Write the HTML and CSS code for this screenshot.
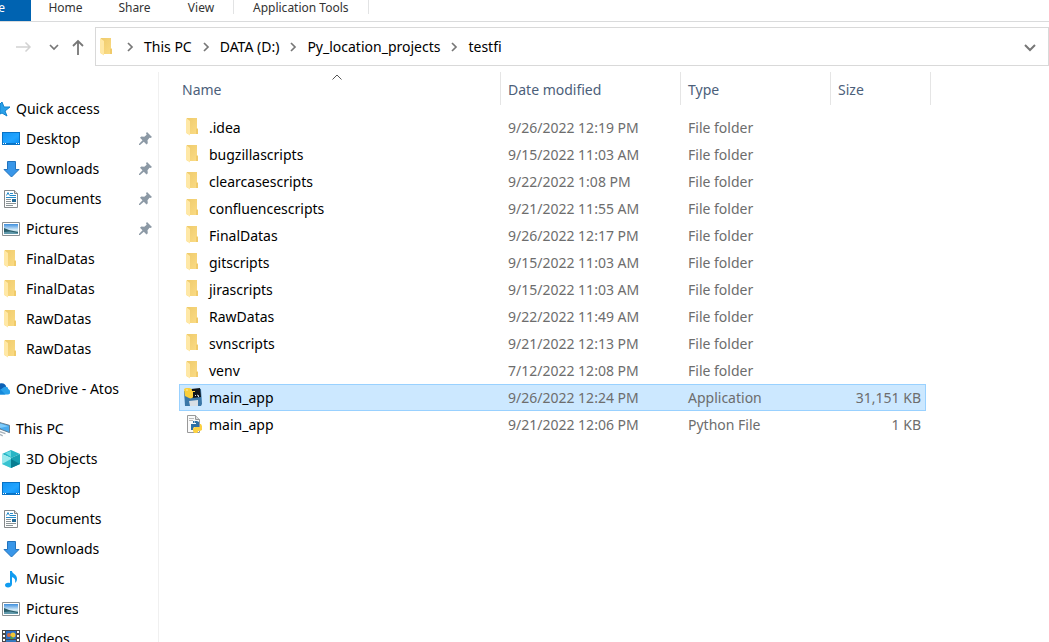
FILE: index.html
```
<!DOCTYPE html>
<html lang="en">
<head>
<meta charset="utf-8">
<title>testfi</title>
<link rel="stylesheet" href="styles.css">
</head>
<body>
<svg class="defs" aria-hidden="true">
  <defs>
    <linearGradient id="gold" x1="0" y1="0" x2="1" y2="1"><stop offset="0" stop-color="#efcb6c"/><stop offset="1" stop-color="#fbdc86"/></linearGradient>
    <linearGradient id="blue" x1="0" y1="0" x2="1" y2="1"><stop offset="0" stop-color="#1496f5"/><stop offset=".6" stop-color="#22a4ff"/><stop offset="1" stop-color="#0b8ff2"/></linearGradient>
    <linearGradient id="sky" x1="0" y1="0" x2="0" y2="1"><stop offset="0" stop-color="#3f8fdd"/><stop offset=".6" stop-color="#d9eefa"/><stop offset="1" stop-color="#4f8f96"/></linearGradient>
  </defs>
  <symbol id="folder" viewBox="0 0 18 18"><path d="M3 0h10v10l1 1v5H3z" fill="url(#gold)"/><path d="M12 10.500l2 .5v5h-2z" fill="#f0ca6a"/><path d="M2 0l4 3v14.500L2 15z" fill="#ffe8a6"/></symbol>
  <symbol id="desktop" viewBox="0 0 18 18"><rect y="2" width="18" height="13" fill="#0873c6"/><rect x="1" y="3" width="16" height="10" fill="url(#blue)"/><path d="M1 13.500h1m1 0h1m10 0h1m1 0h1" stroke="#fff"/></symbol>
  <symbol id="download" viewBox="0 0 18 18"><path d="M5.500 1.500h8v8h3.500l-7.500 7.500-7.500-7.500h3.500z" fill="#3896e8" stroke="#2273bd"/></symbol>
  <symbol id="document" viewBox="0 0 18 18"><path d="M2.500 .5h10l3 3v14h-13z" fill="#fff" stroke="#85898b"/><path d="M12.500 .5v3h3" fill="#ddd" stroke="#85898b"/><path d="M4.500 5.500l1.500-3 1.500 3M8 3.500h3M8 5.500h6" fill="none" stroke="#278bc9"/><path d="M4 7.500h10" stroke="#278bc9"/><path d="M4 9.500h5M4 11.500h5M4 13.500h10M4 15.500h7" stroke="#8b9496"/><path d="M10 9h4v3h-4z" fill="#236995"/></symbol>
  <symbol id="picture" viewBox="0 0 18 18"><path d="M.5 2.500h17v13H.5z" fill="#fff" stroke="#8b9093"/><path d="M2 4h14v10H2z" fill="url(#sky)"/><path d="M2 8l5 2 9 2v2H2z" fill="#295d6a"/><path d="M2 12l6-.5 8 1.500v1H2z" fill="#6199ab"/></symbol>
  <symbol id="cube" viewBox="0 0 18 18"><path d="M9 0l9 4-9 4-9-4z" fill="#26b5c5"/><path d="M0 4l9 4v10l-9-4z" fill="#99e9ed"/><path d="M0 14l9-5v9z" fill="#37c2d0"/><path d="M18 4l-9 4v10l9-4z" fill="#16a0b2"/><path d="M9 9l9 5-9 4z" fill="#087d91"/><path d="M3 3l6-2v6z" fill="#68dce4"/></symbol>
  <symbol id="music" viewBox="0 0 18 18"><path d="M8 1h2c0 3 5 3 5 8 0 2-1 3-2 4 1-4-1-5-3-6v7c0 2-2 3.500-4 3.500S3 16.500 3 15s2-3 5-2z" fill="#119cf0"/></symbol>
  <symbol id="video" viewBox="0 0 18 18"><path d="M0 0h18v18H0z" fill="#47494d"/><path d="M2 1v17M16 1v17" stroke="#fff" stroke-width="2" stroke-dasharray="2 2"/><path d="M4 1h10v8H4z" fill="#286fc9"/><path d="M4 10h10v8H4z" fill="#3478bd"/><circle cx="7" cy="5" r="2" fill="#d46b3f"/><circle cx="11" cy="5" r="2.500" fill="#f0c735"/><path d="M8 9l1-3 3 3z" fill="#49a444"/></symbol>
  <symbol id="pin" viewBox="0 0 14 14"><path d="M8 0l5 5-1.500 1-1-.3-2 2.500.3 3-1.300 1.300-2.700-2.800L1 13l-1 0 0-1 3.500-3.800L1 5.700l1.300-1.200 3 .3 2.400-2L7 1.200z" fill="#8c99a5"/></symbol>
  <symbol id="chevron" viewBox="0 0 8 10"><path d="M2 1l4 4-4 4" fill="none" stroke="#777" stroke-width="1.700"/></symbol>
</svg>

<nav class="tabs" aria-label="Ribbon">
  <button class="tab tab-file">File</button>
  <button class="tab tab-home">Home</button>
  <button class="tab tab-share">Share</button>
  <button class="tab tab-view">View</button>
  <button class="tab tab-tools">Application Tools</button>
</nav>

<div class="toolbar">
  <button class="tool forward" aria-label="Forward"><svg width="16" height="12" viewBox="0 0 16 12"><path d="M0 6h14M9.500 1.500L14 6l-4.500 4.500" fill="none" stroke="#d2d2d2" stroke-width="1.500"/></svg></button>
  <button class="tool recent" aria-label="Recent locations"><svg width="10" height="8" viewBox="0 0 10 8"><path d="M1 2l4 4 4-4" fill="none" stroke="#777" stroke-width="1.700"/></svg></button>
  <button class="tool up" aria-label="Up"><svg width="12" height="16" viewBox="0 0 12 16"><path d="M6 16V2M1 7l5-5 5 5" fill="none" stroke="#777" stroke-width="1.800"/></svg></button>
  <div class="address">
    <svg class="icon"><use href="#folder"/></svg>
    <svg class="sep"><use href="#chevron"/></svg><a href="#">This PC</a>
    <svg class="sep"><use href="#chevron"/></svg><a href="#">DATA (D:)</a>
    <svg class="sep"><use href="#chevron"/></svg><a href="#">Py_location_projects</a>
    <svg class="sep"><use href="#chevron"/></svg><a href="#">testfi</a>
    <button class="history" aria-label="Previous locations"><svg width="12" height="8" viewBox="0 0 12 8"><path d="M1 1l5 5 5-5" fill="none" stroke="#777" stroke-width="2"/></svg></button>
  </div>
</div>

<div class="main">
  <nav class="sidebar" aria-label="Folders">
    <section>
      <a class="root" href="#"><svg width="10" height="16" viewBox="0 0 10 16"><path d="M2 1l2 5 6 0-5 4 2 5-5-3-2 1V3z" fill="#2aa1ea" stroke="#1382cc"/></svg>Quick access</a>
      <a href="#"><svg class="icon"><use href="#desktop"/></svg>Desktop<svg class="pin"><use href="#pin"/></svg></a>
      <a href="#"><svg class="icon"><use href="#download"/></svg>Downloads<svg class="pin"><use href="#pin"/></svg></a>
      <a href="#"><svg class="icon"><use href="#document"/></svg>Documents<svg class="pin"><use href="#pin"/></svg></a>
      <a href="#"><svg class="icon"><use href="#picture"/></svg>Pictures<svg class="pin"><use href="#pin"/></svg></a>
      <a href="#"><svg class="icon"><use href="#folder"/></svg>FinalDatas</a>
      <a href="#"><svg class="icon"><use href="#folder"/></svg>FinalDatas</a>
      <a href="#"><svg class="icon"><use href="#folder"/></svg>RawDatas</a>
      <a href="#"><svg class="icon"><use href="#folder"/></svg>RawDatas</a>
    </section>
    <section>
      <a class="root" href="#"><svg width="11" height="14" viewBox="0 0 11 14"><path d="M0 1c4-1 6 1 7 4l-3 5-4-2z" fill="#0c60b5"/><path d="M0 8l4-3c3-1 5 0 5 2 3 1 3 6 0 6H0z" fill="#29a0ea"/><path d="M0 7l6 6H0z" fill="#1488da"/></svg>OneDrive - Atos</a>
    </section>
    <section>
      <a class="root" href="#"><svg width="11" height="16" viewBox="0 0 11 16"><path d="M0 1l10.500 3v8L0 8z" fill="#48abef" stroke="#607586"/><path d="M0 2l9 3-9 2z" fill="#80ccfa"/><path d="M0 11l6 2M0 14l3 1.500" stroke="#a9b4bd" stroke-width="1.500"/></svg>This PC</a>
      <a href="#"><svg class="icon"><use href="#cube"/></svg>3D Objects</a>
      <a href="#"><svg class="icon"><use href="#desktop"/></svg>Desktop</a>
      <a href="#"><svg class="icon"><use href="#document"/></svg>Documents</a>
      <a href="#"><svg class="icon"><use href="#download"/></svg>Downloads</a>
      <a href="#"><svg class="icon"><use href="#music"/></svg>Music</a>
      <a href="#"><svg class="icon"><use href="#picture"/></svg>Pictures</a>
      <a href="#"><svg class="icon"><use href="#video"/></svg>Videos</a>
    </section>
  </nav>

  <main class="files">
    <table>
      <colgroup><col class="c-name"><col class="c-date"><col class="c-type"><col class="c-size"><col class="c-end"></colgroup>
      <thead>
        <tr><th class="sorted" aria-sort="ascending">Name<svg class="sort" width="10" height="6" viewBox="0 0 10 6"><path d="M.5 5.500L5 1l4.500 4.500" fill="none" stroke="#555"/></svg></th><th>Date modified</th><th>Type</th><th class="size-head">Size</th><td class="end"></td></tr>
      </thead>
      <tbody>
        <tr><td><svg class="icon"><use href="#folder"/></svg>.idea</td><td>9/26/2022 12:19 PM</td><td>File folder</td><td></td></tr>
        <tr><td><svg class="icon"><use href="#folder"/></svg>bugzillascripts</td><td>9/15/2022 11:03 AM</td><td>File folder</td><td></td></tr>
        <tr><td><svg class="icon"><use href="#folder"/></svg>clearcasescripts</td><td>9/22/2022 1:08 PM</td><td>File folder</td><td></td></tr>
        <tr><td><svg class="icon"><use href="#folder"/></svg>confluencescripts</td><td>9/21/2022 11:55 AM</td><td>File folder</td><td></td></tr>
        <tr><td><svg class="icon"><use href="#folder"/></svg>FinalDatas</td><td>9/26/2022 12:17 PM</td><td>File folder</td><td></td></tr>
        <tr><td><svg class="icon"><use href="#folder"/></svg>gitscripts</td><td>9/15/2022 11:03 AM</td><td>File folder</td><td></td></tr>
        <tr><td><svg class="icon"><use href="#folder"/></svg>jirascripts</td><td>9/15/2022 11:03 AM</td><td>File folder</td><td></td></tr>
        <tr><td><svg class="icon"><use href="#folder"/></svg>RawDatas</td><td>9/22/2022 11:49 AM</td><td>File folder</td><td></td></tr>
        <tr><td><svg class="icon"><use href="#folder"/></svg>svnscripts</td><td>9/21/2022 12:13 PM</td><td>File folder</td><td></td></tr>
        <tr><td><svg class="icon"><use href="#folder"/></svg>venv</td><td>7/12/2022 12:08 PM</td><td>File folder</td><td></td></tr>
        <tr class="selected"><td><svg class="icon" viewBox="0 0 18 18"><path d="M0 3l17-2 1 15-1 2-16 0z" fill="#3a77a8"/><path d="M7 1l9-1 1 9-9 1z" fill="#10151a"/><path d="M5 13l9-1v6H6z" fill="#d8dfe5"/><path d="M0 1c3-2 8-1 8 1v1h3v1H9v5c0 1-3 2-4 1L1 8z" fill="#fbcf39"/><path d="M2 2h2" stroke="#fff0aa"/><path d="M11 8l1-1m1 0l2 1-1 1" fill="none" stroke="#d7e3ed"/></svg>main_app</td><td>9/26/2022 12:24 PM</td><td>Application</td><td>31,151 KB</td></tr>
        <tr><td><svg class="icon" viewBox="0 0 18 18"><path d="M3.500 .5h8l4 4v13h-12z" fill="#fafafa" stroke="#999"/><path d="M11.500 .5v4h4" fill="#ddd" stroke="#999"/><path d="M5 3.500h5M5 5.500h4" stroke="#bbb"/><path d="M9 6h4l2 1v5h-5l-1 3H7V9h5V8H9z" fill="#2f70a5"/><path d="M16 9h1l1 2v4l-2 1h-2v1l-1 1h-3l-1-2v-3l2-1h5z" fill="#fcd142"/><path d="M10 7h1M14 16.500h1" stroke="#fff"/></svg>main_app</td><td>9/21/2022 12:06 PM</td><td>Python File</td><td>1 KB</td></tr>
      </tbody>
    </table>
  </main>
</div>
</body>
</html>
```
FILE: styles.css
```
* { box-sizing: border-box; }
body {
  margin: 0;
  height: 100vh;
  overflow: hidden;
  display: flex;
  flex-direction: column;
  background: #fff;
  color: #000;
  font: 14px/20px "Noto Sans", "Open Sans", sans-serif;
}
a { color: inherit; text-decoration: none; }
button { border: 0; padding: 0; background: none; font: inherit; color: inherit; }
svg { flex: none; }
.defs { position: absolute; width: 0; height: 0; }
.icon { width: 18px; height: 18px; }

.tabs { display: flex; height: 22px; flex: none; border-bottom: 1px solid #dadbdc; font-size: 12px; color: #333; }
.tab { height: 21px; padding-bottom: 6px; line-height: 15px; white-space: nowrap; }
.tab-file { width: 31px; padding-right: 26px; background: #0063b1; color: #fff; direction: rtl; overflow: hidden; }
.tab-home { width: 69px; }
.tab-share { width: 69px; }
.tab-view { width: 64px; }
.tab-tools { height: 14px; padding: 0 19px; border: solid #e2e3e4; border-width: 0 1px; }

.toolbar { display: flex; align-items: center; flex: none; height: 50px; padding: 5px 0; }
.toolbar .tool { display: flex; align-items: center; justify-content: center; height: 40px; }
.forward { width: 48px; }
.recent { width: 12px; }
.up { width: 35px; }
.address { display: flex; align-items: center; flex: 1; height: 39px; align-self: flex-start; border: 1px solid #d9d9d9; padding-left: 2px; white-space: nowrap; }
.sep { width: 8px; height: 10px; margin: 0 10px; }
.history { margin-left: auto; width: 37px; height: 37px; }

.main { display: flex; flex: 1; min-height: 0; }
.sidebar { width: 159px; flex: none; padding-top: 22px; border-right: 1px solid #f0f0f0; overflow: hidden; }
.sidebar section { margin-bottom: 10px; }
.sidebar a { display: flex; align-items: center; gap: 6px; height: 30px; padding: 0 5px 0 2px; white-space: nowrap; }
.sidebar .root { padding-left: 0; }
.sidebar .root svg { width: 10px; }
.pin { width: 14px; height: 14px; margin-left: auto; }

.files { flex: 1; min-width: 0; padding-left: 20px; overflow: hidden; }
table { table-layout: fixed; width: 752px; border-collapse: separate; border-spacing: 0; }
.c-name { width: 322px; }
.c-date { width: 180px; }
.c-type { width: 150px; }
.c-size { width: 95px; }
.c-end { width: 5px; }
th { position: relative; height: 33px; padding: 3px 7px 0; border-right: 1px solid #e5e5e5; text-align: left; font-weight: 400; color: #4c607a; }
th.sorted { padding-left: 3px; }
th.size-head { border-right: 0; }
.end { border-right: 1px solid #e5e5e5; }
.sort { position: absolute; top: 2px; left: calc(50% - 8px); }
thead::after { content: ""; display: block; height: 9px; }
tbody td { height: 27px; padding: 0 7px; color: #6d6d6d; white-space: nowrap; }
tbody td:first-child { padding: 0 5px; color: #000; }
tbody td:nth-child(4) { padding: 0 5px; text-align: right; }
tbody .icon { margin-right: 7px; vertical-align: -3px; }
.selected td { background: #cce8ff; border: solid #99d1ff; border-width: 1px 0; }
.selected td:first-child { border-left-width: 1px; padding-left: 4px; }
.selected td:last-child { border-right-width: 1px; padding-right: 4px; }
```
